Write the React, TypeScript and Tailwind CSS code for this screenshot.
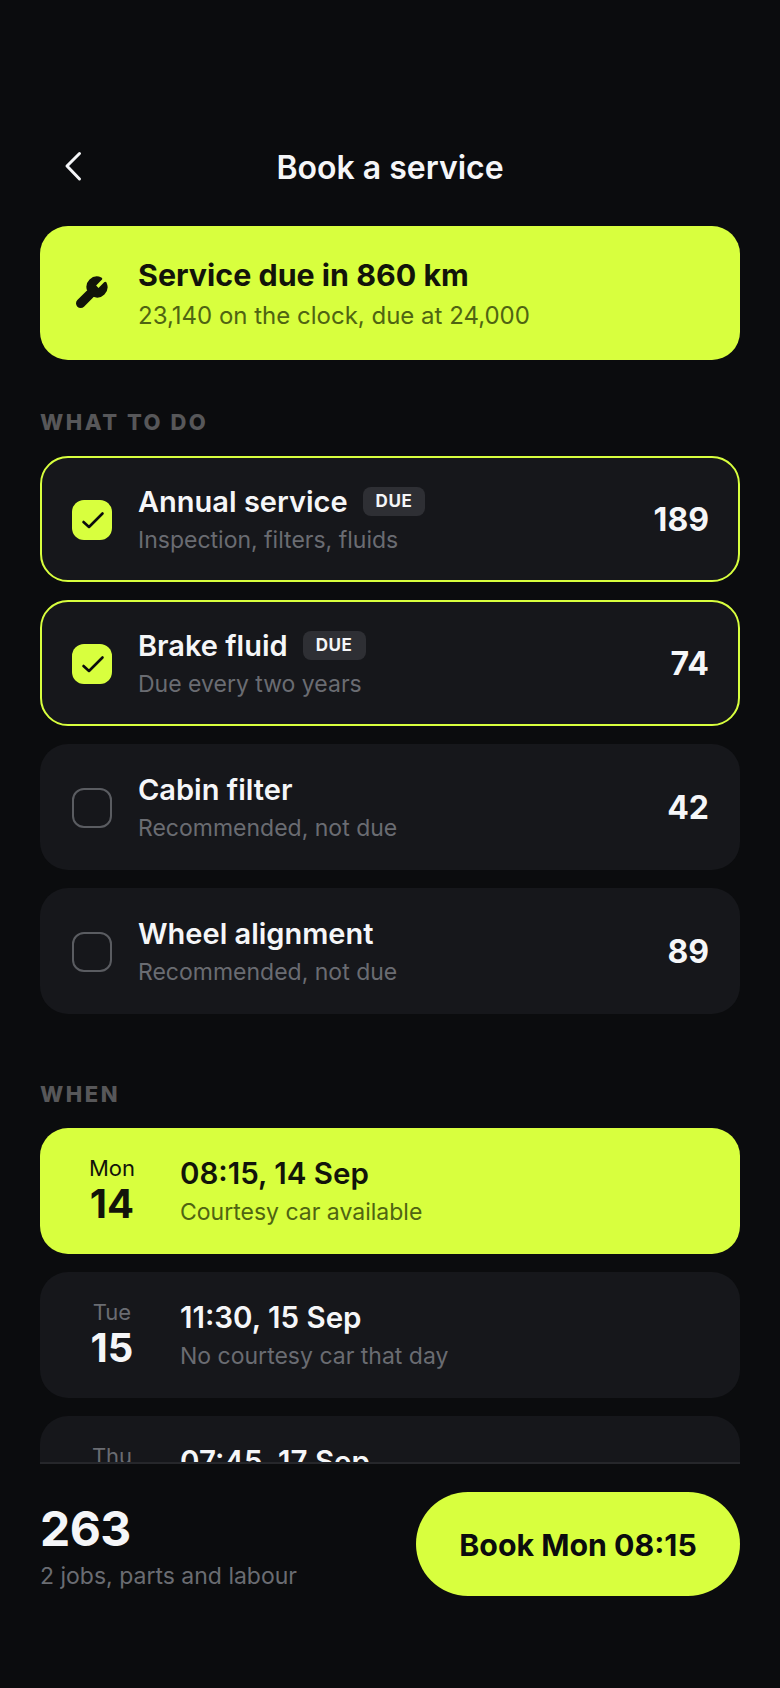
import React from "react";

const font = { fontFamily: "Inter, sans-serif" };

function Check({ on }: { on: boolean }) {
  return on ? (
    <div className="w-10 h-10 mt-[2px] rounded-[12px] bg-[#d8ff3e] flex items-center justify-center shrink-0">
      <svg width="40" height="40" viewBox="0 0 40 40" fill="none" stroke="#0b0c0e" strokeWidth="2.6" strokeLinecap="round" strokeLinejoin="round">
        <path d="M11.5 22 L17 27 L30.5 13.5" />
      </svg>
    </div>
  ) : (
    <div className="w-10 h-10 mt-[2px] rounded-[12px] border-2 border-[#5a5c61] shrink-0" />
  );
}

function Job({ name, sub, price, on, due }: { name: string; sub: string; price: string; on?: boolean; due?: boolean }) {
  return (
    <div className={`h-[126px] rounded-[28px] bg-[#16171b] flex items-center ${on ? "border-2 border-[#d8ff3e] px-[30px]" : "px-8"}`}>
      <Check on={!!on} />
      <div className="ml-[26px] flex-1">
        <div className="flex items-center gap-[15px]">
          <span className="text-[29px] leading-[38px] font-semibold text-[#f5f6f8]">{name}</span>
          {due && (
            <span className="h-[29px] px-[13px] rounded-[8px] bg-[#2e2f34] text-[#f5f6f8] text-[17px] font-bold tracking-[0.6px] flex items-center">DUE</span>
          )}
        </div>
        <div className="text-[23px] leading-[32px] mt-[3px] text-[#6a6c72]">{sub}</div>
      </div>
      <div className="text-[32px] mt-[2px] -mr-px font-bold text-[#f5f6f8]">{price}</div>
    </div>
  );
}

function Slot({ day, num, time, sub, on }: { day: string; num: string; time: string; sub: string; on?: boolean }) {
  return (
    <div className={`h-[126px] rounded-[28px] flex items-center px-8 shrink-0 ${on ? "bg-[#d8ff3e]" : "bg-[#16171b]"}`}>
      <div className="w-[80px] text-center shrink-0">
        <div className={`text-[22px] leading-[26px] ${on ? "text-[#12140a]" : "text-[#6a6c72]"}`}>{day}</div>
        <div className={`text-[40px] leading-[46px] font-bold ${on ? "text-[#12140a]" : "text-[#f5f6f8]"}`}>{num}</div>
      </div>
      <div className="ml-[28px] pb-px">
        <div className={`text-[29.5px] leading-[38px] font-semibold ${on ? "text-[#12140a]" : "text-[#f5f6f8]"}`}>{time}</div>
        <div className={`text-[23px] leading-[32px] mt-[4px] ${on ? "text-[#4f6412]" : "text-[#6a6c72]"}`}>{sub}</div>
      </div>
    </div>
  );
}

export default function App() {
  return (
    <div style={font} className="w-[780px] h-[1688px] bg-[#0b0c0e] flex flex-col overflow-hidden">
      <div className="flex-1 min-h-0 overflow-hidden px-10 pt-[136px]">
        <div className="relative h-[60px] flex items-center justify-center">
          <svg className="absolute left-[20px] top-[12px]" width="36" height="36" viewBox="0 0 36 36" fill="none" stroke="#f5f6f8" strokeWidth="3" strokeLinecap="round" strokeLinejoin="round">
            <path d="M19.5 5.5 L7 18 L19.5 31" />
          </svg>
          <span className="text-[32px] mt-[3px] font-semibold text-[#f5f6f8]">Book a service</span>
        </div>
        <div className="mt-[30px] h-[134px] rounded-[28px] bg-[#d8ff3e] flex items-center pl-8">
          <div className="w-10 h-10 flex items-center justify-center shrink-0">
            <svg className="-ml-[2px]" width="36" height="36" viewBox="0 0 24 24" fill="#12140a" stroke="#12140a" strokeWidth="2" strokeLinecap="round" strokeLinejoin="round">
              <path d="M14.7 6.3a1 1 0 0 0 0 1.4l1.6 1.6a1 1 0 0 0 1.4 0l3.77-3.77a6 6 0 0 1-7.94 7.94l-6.91 6.91a2.12 2.12 0 0 1-3-3l6.91-6.91a6 6 0 0 1 7.94-7.94l-3.76 3.76z" />
            </svg>
          </div>
          <div className="ml-[26px]">
            <div className="text-[30.4px] leading-[40px] font-bold text-[#12140a]">Service due in 860 km</div>
            <div className="text-[24px] leading-[32px] mt-[5px] text-[#4f6412]">23,140 on the clock, due at 24,000</div>
          </div>
        </div>
        <div className="mt-[48px] text-[22px] leading-[28px] font-extrabold tracking-[2.5px] text-[#575759]">WHAT TO DO</div>
        <div className="mt-[20px] flex flex-col gap-[18px]">
          <Job name="Annual service" sub="Inspection, filters, fluids" price="189" on due />
          <Job name="Brake fluid" sub="Due every two years" price="74" on due />
          <Job name="Cabin filter" sub="Recommended, not due" price="42" />
          <Job name="Wheel alignment" sub="Recommended, not due" price="89" />
        </div>
        <div className="mt-[66px] text-[22px] leading-[28px] font-extrabold tracking-[2.5px] text-[#575759]">WHEN</div>
        <div className="mt-[20px] flex flex-col gap-[18px]">
          <Slot day="Mon" num="14" time="08:15, 14 Sep" sub="Courtesy car available" on />
          <Slot day="Tue" num="15" time="11:30, 15 Sep" sub="No courtesy car that day" />
          <Slot day="Thu" num="17" time="07:45, 17 Sep" sub="Courtesy car available" />
        </div>
      </div>
      <div className="shrink-0 h-[226px] px-10">
        <div className="border-t-2 border-[#26272b] pt-[28px] flex items-start justify-between">
          <div className="mt-[9px]">
            <div className="text-[48px] leading-[56px] font-bold tracking-[-0.6px] text-[#f5f6f8]">263</div>
            <div className="text-[23px] leading-[32px] mt-[3px] text-[#6a6c72]">2 jobs, parts and labour</div>
          </div>
          <div className="w-[324px] h-[104px] pt-[3px] rounded-full bg-[#d8ff3e] flex items-center justify-center text-[30.3px] font-bold text-[#0b0c0e]">Book Mon 08:15</div>
        </div>
      </div>
    </div>
  );
}
